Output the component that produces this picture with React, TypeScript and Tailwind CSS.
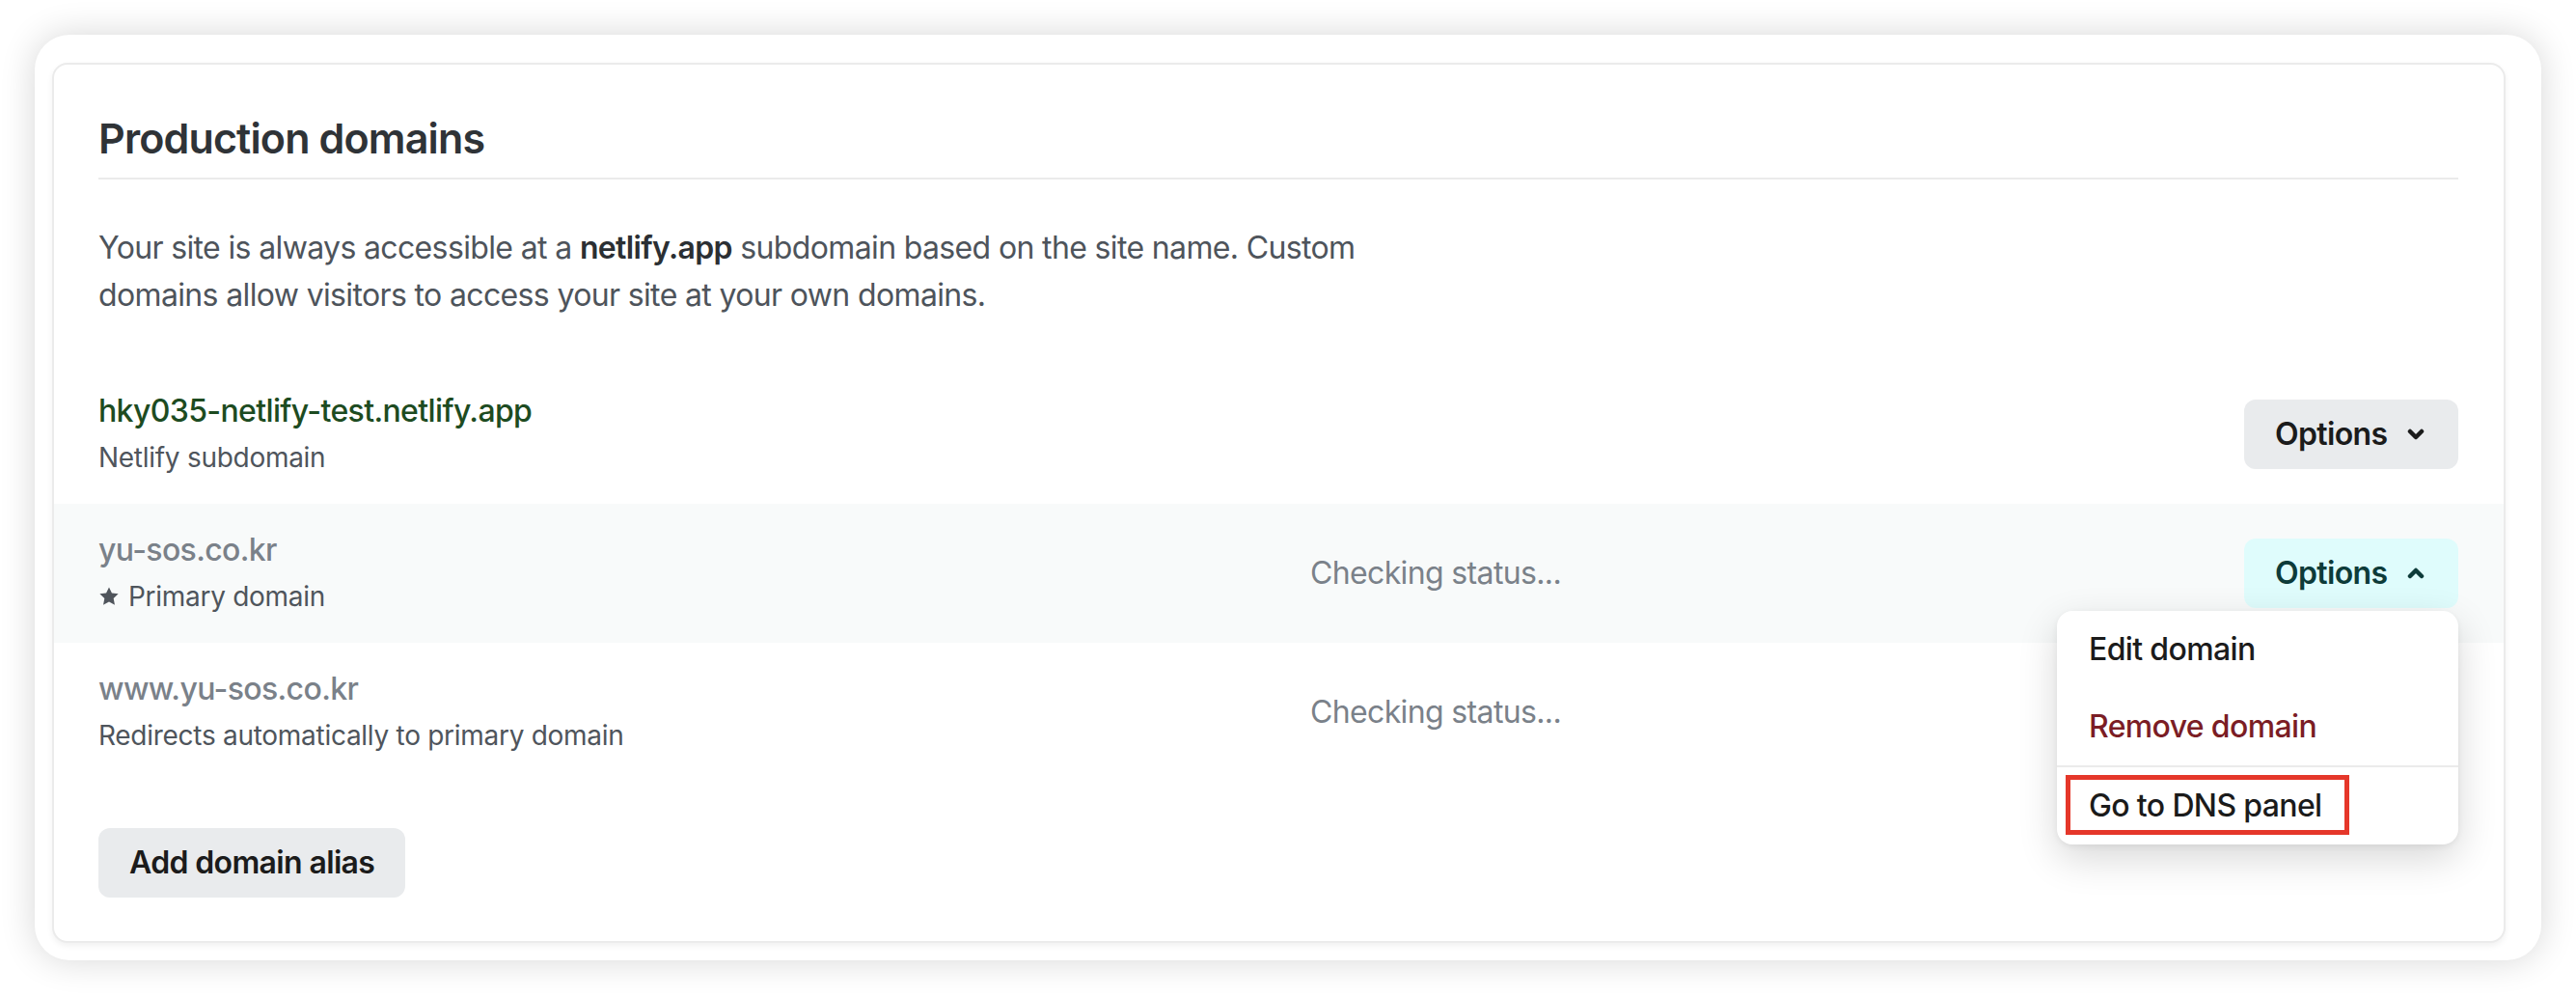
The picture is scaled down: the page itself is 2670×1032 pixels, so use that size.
import React from "react";

function ChevronDown({ className }: { className?: string }) {
  return (
    <svg width="18" height="12" viewBox="0 0 18 12" className={className} fill="none">
      <polyline points="3,3 9,9 15,3" stroke="currentColor" strokeWidth="4.5" strokeLinecap="round" strokeLinejoin="round" />
    </svg>
  );
}

function ChevronUp({ className }: { className?: string }) {
  return (
    <svg width="18" height="12" viewBox="0 0 18 12" className={className} fill="none">
      <polyline points="3,9 9,3 15,9" stroke="currentColor" strokeWidth="4.5" strokeLinecap="round" strokeLinejoin="round" />
    </svg>
  );
}

function Star() {
  return (
    <svg width="22" height="22" viewBox="0 0 24 24" className="text-[#50555c]">
      <path
        fill="currentColor"
        d="M12 1.5l3.2 6.7 7.3.9-5.4 5.1 1.4 7.3L12 18l-6.5 3.5 1.4-7.3-5.4-5.1 7.3-.9z"
      />
    </svg>
  );
}

function Row({
  name,
  nameClass,
  sub,
  status,
  bg,
  children,
}: {
  name: string;
  nameClass: string;
  sub: React.ReactNode;
  status?: string;
  bg?: string;
  children?: React.ReactNode;
}) {
  return (
    <div className={`flex h-[144px] items-center pl-[46px] pr-[47px] ${bg ?? ""}`}>
      <div className="flex h-full w-[1256px] shrink-0 flex-col pt-[24px]">
        <div className={`text-[32px] font-medium leading-[48px] tracking-[-0.02em] ${nameClass}`}>{name}</div>
        <div className="mt-[4px] text-[28px] leading-[40px] tracking-[-0.01em] text-[#4f555c]">{sub}</div>
      </div>
      <div className="flex-1 text-[32px] leading-[48px] tracking-[-0.02em] text-[#7a8189]">{status}</div>
      {children}
    </div>
  );
}

export default function App() {
  return (
    <div
      className="min-h-screen bg-white p-[36px]"
      style={{ fontFamily: "Inter, 'Noto Sans', sans-serif" }}
    >
      <div className="h-[959px] rounded-[36px] bg-white pb-[18px] pl-[18px] pr-[37px] pt-[29px] shadow-[0_0_36px_rgba(0,0,0,0.16)]">
        <div className="h-full rounded-[16px] border-2 border-[#ebebeb] bg-white shadow-[0_3px_6px_rgba(0,0,0,0.06)]">
          <div className="pl-[46px] pr-[47px]">
            <div className="border-b-2 border-[#ebebeb] pb-[17px] pt-[52px]">
              <h2 className="text-[43px] font-semibold leading-[48px] tracking-[-0.02em] text-[#2f3337]">
                Production domains
              </h2>
            </div>
            <p className="mt-[46px] max-w-[1400px] text-[32px] leading-[49px] tracking-[-0.02em] text-[#4e545b]">
              Your site is always accessible at a <span className="font-semibold text-[#2b2f33]">netlify.app</span> subdomain based on the site name. Custom
              <br />
              domains allow visitors to access your site at your own domains.
            </p>
          </div>

          <div className="mt-[48px]">
            <Row
              name="hky035-netlify-test.netlify.app"
              nameClass="text-[#1d4b21]"
              sub="Netlify subdomain"
            >
              <button className="flex h-[72px] w-[222px] items-center rounded-[12px] bg-[#e9ebed] pl-[32px] text-[32px] font-semibold tracking-[-0.02em] text-[#1b1b1b]">
                Options
                <ChevronDown className="ml-[21px]" />
              </button>
            </Row>
            <Row
              name="yu-sos.co.kr"
              nameClass="text-[#7a8189]"
              sub={
                <span className="flex items-center gap-[9px]">
                  <Star />
                  Primary domain
                </span>
              }
              status="Checking status..."
              bg="bg-[#f8fafa]"
            >
              <div className="relative">
                <button className="flex h-[72px] w-[222px] items-center rounded-[12px] bg-[#dffcfc] pl-[32px] text-[32px] font-semibold tracking-[-0.02em] text-[#0d3b39]">
                  Options
                  <ChevronUp className="ml-[21px]" />
                </button>
                <div className="absolute right-0 top-[75px] z-10 w-[416px] rounded-[16px] bg-white shadow-[0_14px_40px_rgba(0,0,0,0.16),0_2px_6px_rgba(0,0,0,0.06)]">
                  <div className="flex h-[80px] items-center px-[33px] text-[32px] font-medium tracking-[-0.02em] text-[#1b1b1b]">
                    Edit domain
                  </div>
                  <div className="flex h-[80px] items-center px-[33px] text-[32px] font-medium tracking-[-0.02em] text-[#7b1d25]">
                    Remove domain
                  </div>
                  <div className="relative flex h-[82px] items-center border-t-2 border-[#ebebeb] px-[33px] text-[32px] font-medium tracking-[-0.02em] text-[#1b1b1b]">
                    Go to DNS panel
                    <div className="absolute left-[9px] top-[8px] h-[62px] w-[294px] border-[5px] border-[#e5372a]" />
                  </div>
                </div>
              </div>
            </Row>
            <Row
              name="www.yu-sos.co.kr"
              nameClass="text-[#7a8189]"
              sub="Redirects automatically to primary domain"
              status="Checking status..."
            />
          </div>

          <div className="mt-[48px] pl-[46px]">
            <button className="h-[72px] rounded-[12px] bg-[#e9ebed] px-[32px] text-[32px] font-semibold tracking-[-0.02em] text-[#1b1b1b]">
              Add domain alias
            </button>
          </div>
        </div>
      </div>
    </div>
  );
}
